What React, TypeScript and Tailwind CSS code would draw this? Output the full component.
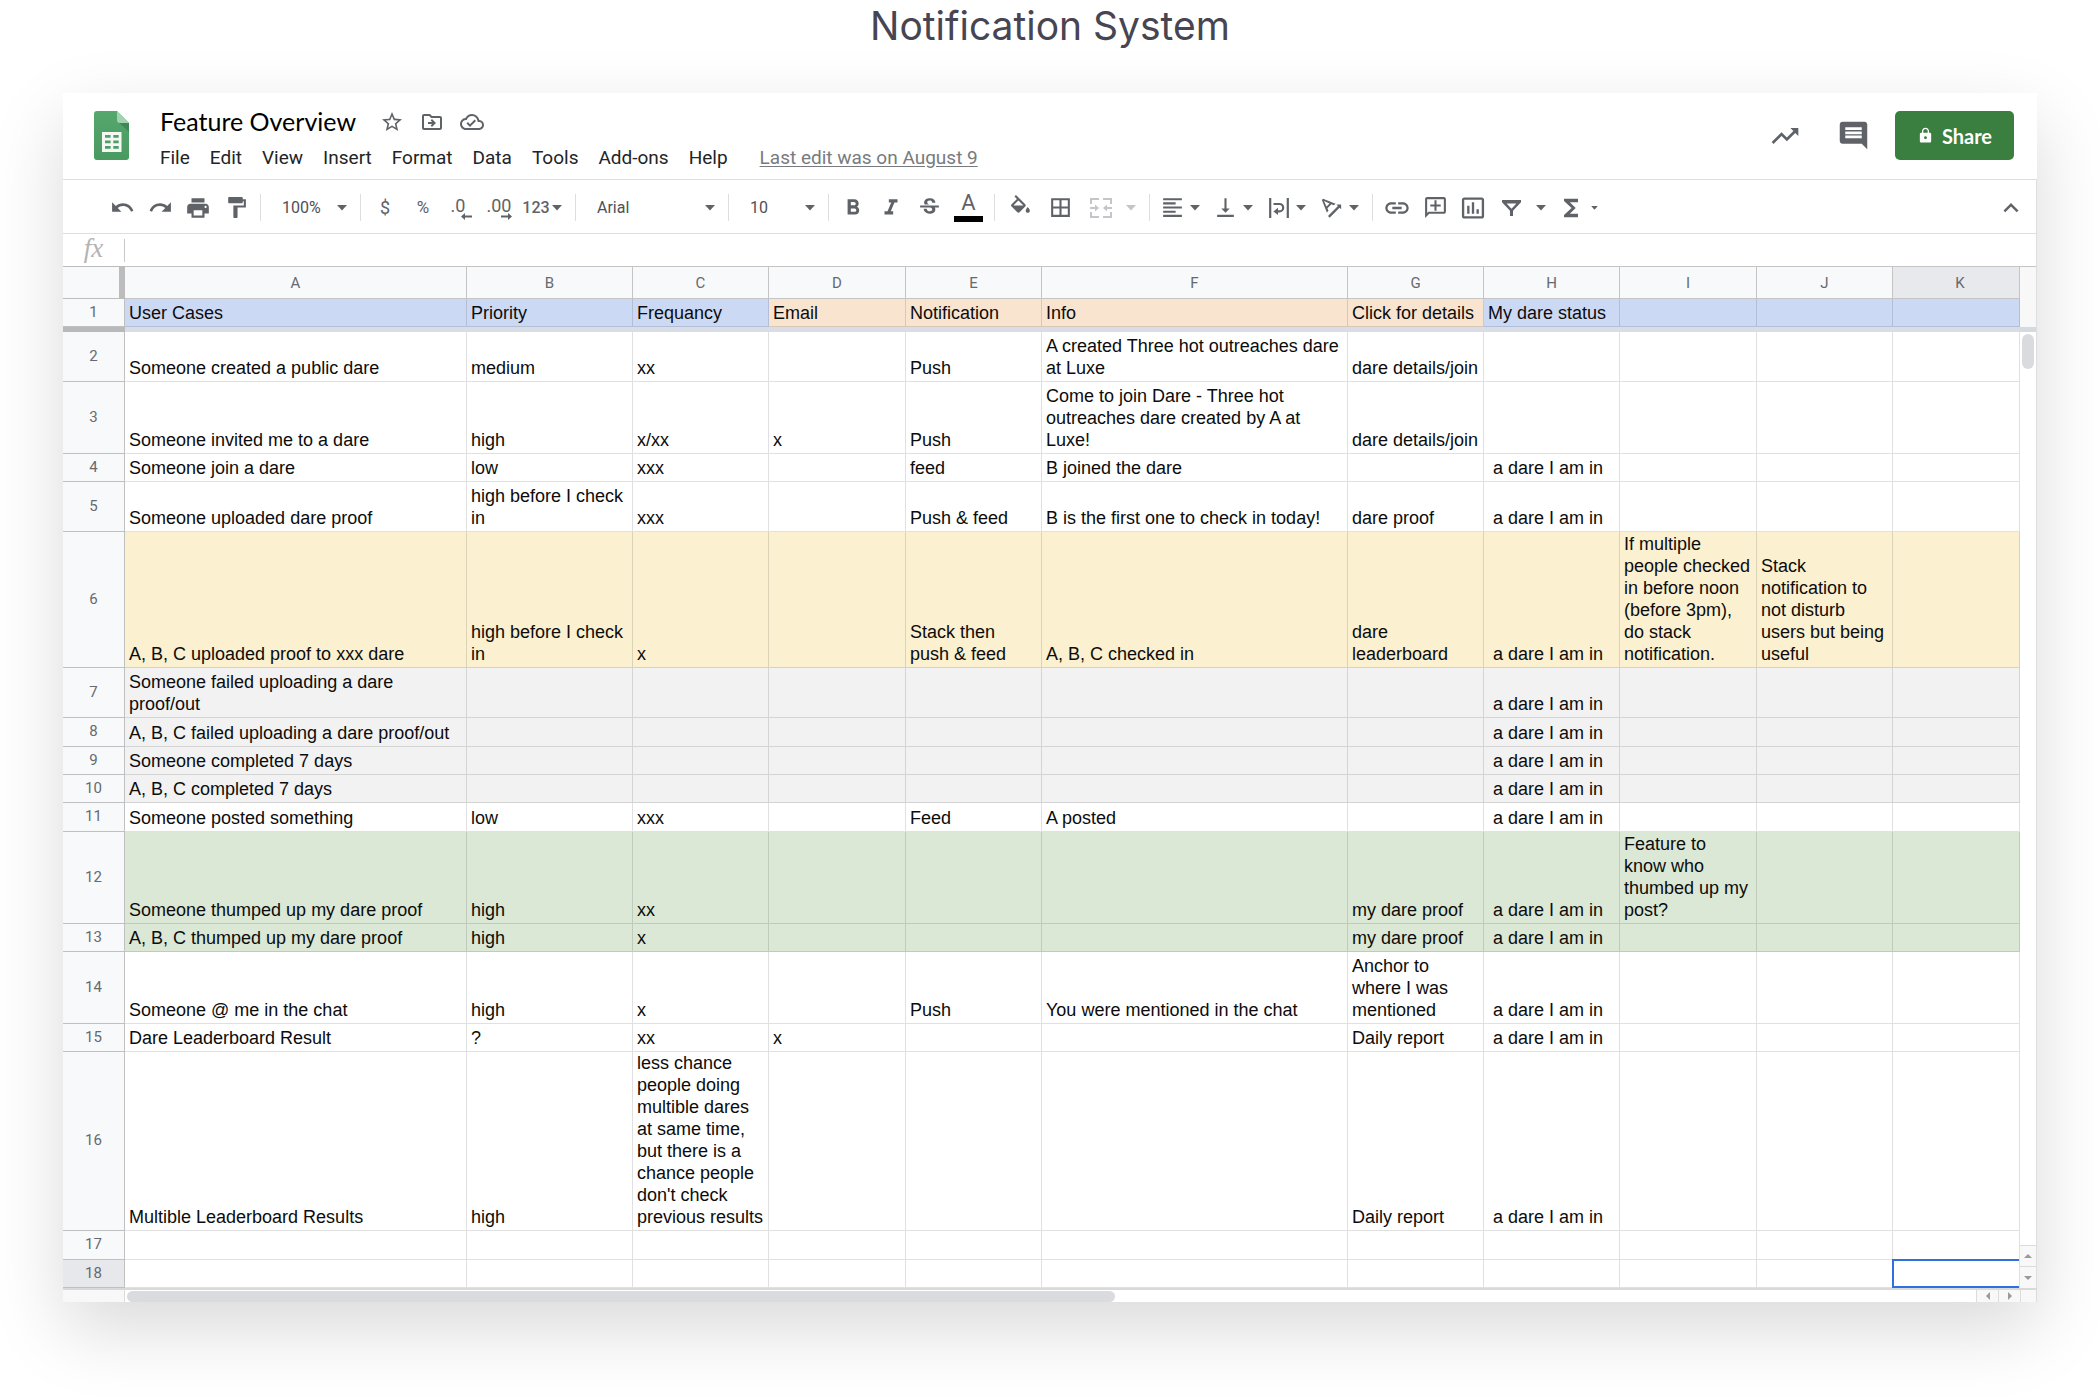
import type { ReactNode } from "react";
import {
  MdBorderAll,
  MdComment,
  MdFormatAlignLeft,
  MdFormatBold,
  MdFormatItalic,
  MdFormatPaint,
  MdFunctions,
  MdInsertChartOutlined,
  MdKeyboardArrowUp,
  MdLink,
  MdLock,
  MdOutlineAddComment,
  MdOutlineCloudDone,
  MdOutlineDriveFileMove,
  MdPrint,
  MdRedo,
  MdStarBorder,
  MdStrikethroughS,
  MdTextRotationAngleup,
  MdTrendingUp,
  MdUndo,
  MdVerticalAlignBottom,
} from "react-icons/md";

type Row = {
  height: string;
  fill?: string;
  cells: Record<string, string>;
};

const COLUMNS = [
  { id: "A", width: "w-[342px]" },
  { id: "B", width: "w-[166px]" },
  { id: "C", width: "w-[136px]" },
  { id: "D", width: "w-[137px]" },
  { id: "E", width: "w-[136px]" },
  { id: "F", width: "w-[306px]" },
  { id: "G", width: "w-[136px]" },
  { id: "H", width: "w-[136px]" },
  { id: "I", width: "w-[137px]" },
  { id: "J", width: "w-[136px]" },
  { id: "K", width: "" },
];

const HEADINGS: Record<string, string> = {
  A: "User Cases",
  B: "Priority",
  C: "Frequancy",
  D: "Email",
  E: "Notification",
  F: "Info",
  G: "Click for details",
  H: "My dare status",
};

const ORANGE_COLUMNS = ["D", "E", "F", "G"];

const YELLOW = "bg-[#fbf0cf]";
const GRAY = "bg-[#f2f2f2]";
const GREEN = "bg-[#dbe8d5]";
const IN_DARE = " a dare I am in";

const ROWS: Row[] = [
  {
    height: "h-[50px]",
    cells: {
      A: "Someone created a public dare",
      B: "medium",
      C: "xx",
      E: "Push",
      F: "A created Three hot outreaches dare\nat Luxe",
      G: "dare details/join",
    },
  },
  {
    height: "h-[72px]",
    cells: {
      A: "Someone invited me to a dare",
      B: "high",
      C: "x/xx",
      D: "x",
      E: "Push",
      F: "Come to join Dare - Three hot\noutreaches dare created by A at\nLuxe!",
      G: "dare details/join",
    },
  },
  {
    height: "h-[28px]",
    cells: { A: "Someone join a dare", B: "low", C: "xxx", E: "feed", F: "B joined the dare", H: IN_DARE },
  },
  {
    height: "h-[50px]",
    cells: {
      A: "Someone uploaded dare proof",
      B: "high before I check\nin",
      C: "xxx",
      E: "Push & feed",
      F: "B is the first one to check in today!",
      G: "dare proof",
      H: IN_DARE,
    },
  },
  {
    height: "h-[136px]",
    fill: YELLOW,
    cells: {
      A: "A, B, C uploaded proof to xxx dare",
      B: "high before I check\nin",
      C: "x",
      E: "Stack then\npush & feed",
      F: "A, B, C checked in",
      G: "dare\nleaderboard",
      H: IN_DARE,
      I: "If multiple\npeople checked\nin before noon\n(before 3pm),\ndo stack\nnotification.",
      J: "Stack\nnotification to\nnot disturb\nusers but being\nuseful",
    },
  },
  { height: "h-[50px]", fill: GRAY, cells: { A: "Someone failed uploading a dare\nproof/out", H: IN_DARE } },
  { height: "h-[29px]", fill: GRAY, cells: { A: "A, B, C failed uploading a dare proof/out", H: IN_DARE } },
  { height: "h-[28px]", fill: GRAY, cells: { A: "Someone completed 7 days", H: IN_DARE } },
  { height: "h-[28px]", fill: GRAY, cells: { A: "A, B, C completed 7 days", H: IN_DARE } },
  {
    height: "h-[29px]",
    cells: { A: "Someone posted something", B: "low", C: "xxx", E: "Feed", F: "A posted", H: IN_DARE },
  },
  {
    height: "h-[92px]",
    fill: GREEN,
    cells: {
      A: "Someone thumped up my dare proof",
      B: "high",
      C: "xx",
      G: "my dare proof",
      H: IN_DARE,
      I: "Feature to\nknow who\nthumbed up my\npost?",
    },
  },
  {
    height: "h-[28px]",
    fill: GREEN,
    cells: { A: "A, B, C thumped up my dare proof", B: "high", C: "x", G: "my dare proof", H: IN_DARE },
  },
  {
    height: "h-[72px]",
    cells: {
      A: "Someone @ me in the chat",
      B: "high",
      C: "x",
      E: "Push",
      F: "You were mentioned in the chat",
      G: "Anchor to\nwhere I was\nmentioned",
      H: IN_DARE,
    },
  },
  {
    height: "h-[28px]",
    cells: { A: "Dare Leaderboard Result", B: "?", C: "xx", D: "x", G: "Daily report", H: IN_DARE },
  },
  {
    height: "h-[179px]",
    cells: {
      A: "Multible Leaderboard Results",
      B: "high",
      C: "less chance\npeople doing\nmultible dares\nat same time,\nbut there is a\nchance people\ndon't check\nprevious results",
      G: "Daily report",
      H: IN_DARE,
    },
  },
  { height: "h-[29px]", cells: {} },
  { height: "h-[28px]", cells: {} },
];

const MENUS = ["File", "Edit", "View", "Insert", "Format", "Data", "Tools", "Add-ons", "Help"];

function SheetsLogo() {
  return (
    <svg viewBox="0 0 35 49" className="h-[49px] w-[35px]" aria-hidden="true">
      <defs>
        <linearGradient id="sheet" x1="0" y1="0" x2="0" y2="1">
          <stop offset="0" stopColor="#55a76d" />
          <stop offset="1" stopColor="#489a60" />
        </linearGradient>
      </defs>
      <path d="M3 0h20l12 12v34a3 3 0 0 1-3 3H3a3 3 0 0 1-3-3V3a3 3 0 0 1 3-3z" fill="url(#sheet)" />
      <path d="M25 11.500l10 9.500v-9z" fill="#3f8757" />
      <path d="M23 0l12 12h-9a3 3 0 0 1-3-3z" fill="#a3d2b1" />
      <path
        fillRule="evenodd"
        fill="#f4f7f4"
        d="M8 21h19.500v20H8zM11 24v2.800h5.600V24zm8.300 0v2.800h5.400V24zM11 29.500v2.800h5.600v-2.800zm8.300 0v2.800h5.400v-2.800zM11 35v2.800h5.600V35zm8.300 0v2.800h5.400V35z"
      />
    </svg>
  );
}

function Caret({ small = false }: { small?: boolean }) {
  return (
    <svg viewBox="0 0 10 6" className={small ? "h-1 w-[7px] shrink-0" : "h-[6px] w-[10px] shrink-0"} aria-hidden="true">
      <path d="M0 0h10L5 5.500z" fill="currentColor" />
    </svg>
  );
}

function Divider() {
  return <div className="mx-[5px] h-[27px] w-px shrink-0 bg-[#dcdee1]" />;
}

function Tool({ label, width = "w-[38px]", children }: { label: string; width?: string; children: ReactNode }) {
  return (
    <button type="button" aria-label={label} className={`flex h-9 shrink-0 items-center justify-center ${width}`}>
      {children}
    </button>
  );
}

function MenuTool({ label, children }: { label: string; children: ReactNode }) {
  return (
    <button type="button" aria-label={label} className="flex h-9 w-[53px] shrink-0 items-center">
      <span className="flex w-[35px] justify-center">{children}</span>
      <Caret />
    </button>
  );
}

function Picker({ label, value, width }: { label: string; value: string; width: string }) {
  return (
    <div className={`relative shrink-0 ${width}`}>
      <select
        aria-label={label}
        defaultValue={value}
        className="h-9 w-full appearance-none bg-transparent pl-4 text-[16px] text-[#4d5156]"
      >
        <option>{value}</option>
      </select>
      <span className="pointer-events-none absolute inset-y-0 right-2 flex items-center">
        <Caret />
      </span>
    </div>
  );
}

function MergeIcon() {
  return (
    <svg viewBox="0 0 22 20" className="h-5 w-[22px]" fill="none" stroke="currentColor" strokeWidth="2" aria-hidden="true">
      <path d="M1 6V1h8M13 1h8v5M1 14v5h8M13 19h8v-5M0 10h6M22 10h-6" />
      <path d="M5 6.500L9 10l-4 3.500zM17 6.500L13 10l4 3.500z" fill="currentColor" stroke="none" />
    </svg>
  );
}

function WrapIcon() {
  return (
    <svg viewBox="0 0 20 20" className="size-5" fill="none" stroke="currentColor" strokeWidth="2.200" aria-hidden="true">
      <path d="M1.200 0v20M18.800 0v20M4.500 6h6a3.600 3.600 0 0 1 0 7.400H8" />
      <path d="M9 9.800v7.200l-4.600-3.600z" fill="currentColor" stroke="none" />
    </svg>
  );
}

function FillIcon() {
  return (
    <svg viewBox="0 0 24 24" className="size-[25px]" fill="currentColor" aria-hidden="true">
      <path d="M16.560 8.940L7.620 0 6.210 1.410l2.380 2.380-5.150 5.150a1.490 1.490 0 0 0 0 2.120l5.500 5.500c.29.29.68.44 1.060.44s.77-.15 1.060-.44l5.500-5.500c.59-.58.59-1.530 0-2.120zM5.210 10L10 5.210 14.790 10H5.210zM19 11.500s-2 2.170-2 3.500c0 1.100.9 2 2 2s2-.9 2-2c0-1.330-2-3.500-2-3.500z" />
    </svg>
  );
}

function FilterIcon() {
  return (
    <svg viewBox="0 0 19 16" className="h-4 w-[19px]" fill="currentColor" aria-hidden="true">
      <path fillRule="evenodd" d="M0 0h19v2.200L11 10.800V16H8v-5.200L0 2.200zM4.600 3.600l4.900 5.200 4.900-5.200z" />
    </svg>
  );
}

function DecimalArrow({ flip = false }: { flip?: boolean }) {
  return (
    <svg
      viewBox="0 0 11 7"
      className={`absolute right-0 bottom-0 h-[7px] w-[11px] ${flip ? "-scale-x-100" : ""}`}
      fill="currentColor"
      aria-hidden="true"
    >
      <path d="M0 3.500L4 0v2.500h7v2H4V7z" />
    </svg>
  );
}

function ScrollArrow({ label, path, box }: { label: string; path: string; box: string }) {
  return (
    <button type="button" aria-label={label} className={`flex items-center justify-center bg-[#f8f8f8] ${box}`}>
      <svg viewBox="0 0 8 8" className="size-2" fill="#9a9a9a" aria-hidden="true">
        <path d={path} />
      </svg>
    </button>
  );
}

function Header() {
  return (
    <header className="flex items-start justify-between border-b border-[#dcdee0] pt-[18px] pr-[23px] pb-[7px] pl-[31px]">
      <div className="flex">
        <SheetsLogo />
        <div className="ml-[31px]">
          <div className="flex h-[22px] items-center">
            <h2 className="pb-[3px] font-[Lato] text-[25px] leading-6 text-black">Feature Overview</h2>
            <div className="ml-6 flex items-center gap-4 text-[#5f6368]">
              <button type="button" aria-label="Star">
                <MdStarBorder className="size-6" />
              </button>
              <button type="button" aria-label="Move">
                <MdOutlineDriveFileMove className="size-6" />
              </button>
              <button type="button" aria-label="See document status">
                <MdOutlineCloudDone className="size-6" />
              </button>
            </div>
          </div>
          <nav className="mt-[11px] flex items-center gap-5 text-[19px] leading-[28px] text-[#222427]">
            {MENUS.map((menu) => (
              <button key={menu} type="button">
                {menu}
              </button>
            ))}
            <a href="#history" className="ml-3 text-[#777b80] underline underline-offset-2">
              Last edit was on August 9
            </a>
          </nav>
        </div>
      </div>
      <div className="flex h-[49px] items-center text-[#5f6368]">
        <button type="button" aria-label="Activity" className="mr-9">
          <MdTrendingUp className="size-8" />
        </button>
        <button type="button" aria-label="Comments" className="mr-[25px]">
          <MdComment className="size-[33px]" />
        </button>
        <button
          type="button"
          className="flex h-[49px] w-[119px] items-center justify-center gap-2 rounded-[5px] bg-[#3a7e40] font-[Lato] text-[20px] font-bold text-white"
        >
          <MdLock className="size-[17px]" />
          Share
        </button>
      </div>
    </header>
  );
}

function Toolbar() {
  return (
    <div className="flex h-[54px] items-center border-r border-b border-[#dcdee0] pt-[2px] pl-10 text-[#5f6368]">
      <Tool label="Undo"><MdUndo className="size-[25px]" /></Tool>
      <Tool label="Redo"><MdRedo className="size-[25px]" /></Tool>
      <Tool label="Print"><MdPrint className="size-[26px]" /></Tool>
      <Tool label="Paint format"><MdFormatPaint className="size-[25px]" /></Tool>
      <Divider />
      <Picker label="Zoom" value="100%" width="w-[89px]" />
      <Divider />
      <Tool label="Currency"><span className="text-[18px]">$</span></Tool>
      <Tool label="Percent"><span className="text-[17px]">%</span></Tool>
      <Tool label="Decrease decimal places">
        <span className="relative h-6 w-[21px] text-left text-[18px] leading-5">
          .0
          <DecimalArrow />
        </span>
      </Tool>
      <Tool label="Increase decimal places">
        <span className="relative h-6 w-[25px] text-left text-[18px] leading-5">
          .00
          <DecimalArrow flip />
        </span>
      </Tool>
      <Tool label="More formats" width="w-[52px] pr-1">
        <span className="mr-[2px] text-[16px] font-medium">123</span>
        <Caret />
      </Tool>
      <Divider />
      <Picker label="Font" value="Arial" width="w-[142px]" />
      <Divider />
      <Picker label="Font size" value="10" width="w-[89px]" />
      <Divider />
      <Tool label="Bold"><MdFormatBold className="size-[26px]" /></Tool>
      <Tool label="Italic"><MdFormatItalic className="size-[26px]" /></Tool>
      <Tool label="Strikethrough"><MdStrikethroughS className="size-[25px]" /></Tool>
      <Tool label="Text color" width="w-[41px]">
        <span className="w-[29px] border-b-[6px] border-black pb-[3px] text-[22px] leading-[20px]">A</span>
      </Tool>
      <Divider />
      <Tool label="Fill color" width="w-10"><FillIcon /></Tool>
      <Tool label="Borders" width="w-[41px]"><MdBorderAll className="size-[25px]" /></Tool>
      <button
        type="button"
        aria-label="Merge cells"
        className="flex h-9 w-[63px] shrink-0 items-center gap-[14px] pl-[9px] text-[#c3c5c8]"
      >
        <MergeIcon />
        <Caret />
      </button>
      <Divider />
      <MenuTool label="Horizontal align"><MdFormatAlignLeft className="size-[25px]" /></MenuTool>
      <MenuTool label="Vertical align"><MdVerticalAlignBottom className="size-[25px]" /></MenuTool>
      <MenuTool label="Text wrapping"><WrapIcon /></MenuTool>
      <MenuTool label="Text rotation"><MdTextRotationAngleup className="size-[27px]" /></MenuTool>
      <Divider />
      <Tool label="Insert link"><MdLink className="size-7" /></Tool>
      <Tool label="Insert comment"><MdOutlineAddComment className="size-[25px] -scale-x-100" /></Tool>
      <Tool label="Insert chart"><MdInsertChartOutlined className="size-7" /></Tool>
      <Tool label="Create a filter"><FilterIcon /></Tool>
      <Tool label="Filter views" width="w-[22px]"><Caret /></Tool>
      <Tool label="Functions"><MdFunctions className="size-7" /></Tool>
      <Tool label="More functions" width="w-2"><Caret small /></Tool>
      <button type="button" aria-label="Hide the menus" className="mr-[10px] ml-auto">
        <MdKeyboardArrowUp className="size-[30px]" />
      </button>
    </div>
  );
}

function FormulaBar() {
  return (
    <label className="flex h-8 items-center border-r border-[#dcdee0]">
      <span className="w-[61px] pb-1 text-center font-['Liberation_Serif'] text-[27px] leading-6 text-[#b4b4b4] italic">fx</span>
      <input
        type="text"
        aria-label="Formula"
        className="h-[23px] min-w-0 flex-1 border-l border-[#c8c8c8] px-2 text-[18px] outline-none"
      />
    </label>
  );
}

function Grid() {
  return (
    <table className="min-w-0 flex-1 table-fixed border-separate border-spacing-0 text-left font-['Liberation_Sans'] text-[18px] leading-[22px] text-[#0c0c0c]">
      <colgroup>
        <col className="w-[62px]" />
        {COLUMNS.map((c) => (
          <col key={c.id} className={c.width} />
        ))}
      </colgroup>
      <thead>
        <tr className="h-[33px] font-[Roboto] text-[15px] text-[#666a6e]">
          <td className="border-y border-r-[6px] border-[#bcbcbc] bg-[#f8f9fa] p-0" />
          {COLUMNS.map((c) => (
            <th
              key={c.id}
              scope="col"
              className={`border-y border-r border-[#c4c4c4] py-0 pr-0 text-center font-normal ${c.id === "K" ? "bg-[#e8e9ec] pl-2" : "bg-[#f8f9fb] pl-0"}`}
            >
              {c.id}
            </th>
          ))}
        </tr>
      </thead>
      <tbody>
        <tr className="h-[28px]">
          <RowNumber n={1} />
          {COLUMNS.map((c) => (
            <td
              key={c.id}
              className={`overflow-hidden border-r border-b border-black/12 pr-[2px] pb-[2px] pl-1 align-bottom whitespace-pre ${ORANGE_COLUMNS.includes(c.id) ? "bg-[#f9e4d0]" : "bg-[#ccd9f5]"}`}
            >
              {HEADINGS[c.id]}
            </td>
          ))}
        </tr>
        <tr className="h-[5px]" aria-hidden="true">
          <td className="bg-[#b9b9b9] p-0" />
          <td colSpan={11} className="bg-[#d9dde6] p-0" />
        </tr>
        {ROWS.map((row, i) => (
          <tr key={i} className={`${row.height} ${row.fill ?? "bg-white"}`}>
            <RowNumber n={i + 2} active={i + 2 === 18} />
            {COLUMNS.map((c) => (
              <td
                key={c.id}
                className="relative border-r border-b border-black/12 pr-[2px] pb-[2px] pl-1 align-bottom whitespace-pre"
              >
                {row.cells[c.id]}
                {c.id === "K" && i + 2 === 18 && (
                  <div className="absolute -top-px right-0 -bottom-px -left-px border-2 border-r-0 border-[#2f6fe0]" />
                )}
              </td>
            ))}
          </tr>
        ))}
      </tbody>
    </table>
  );
}

function RowNumber({ n, active = false }: { n: number; active?: boolean }) {
  return (
    <th
      scope="row"
      className={`border-r border-b border-[#c0c0c0] p-0 pb-[2px] text-center align-middle font-[Roboto] text-[15px] font-normal text-[#666a6e] ${active ? "bg-[#e6e8ec]" : "bg-[#f8f9fb]"}`}
    >
      {n}
    </th>
  );
}

function VerticalScroll() {
  return (
    <div className="flex w-[17px] shrink-0 flex-col border-r border-[#dcdee0] bg-white">
      <div className="h-[61px] border-t border-[#c4c4c4] bg-[#f8f8f8]" />
      <div className="h-[5px] bg-[#d5d9e2]" />
      <div className="flex-1 px-[2px] pt-[2px]">
        <div className="h-[35px] w-3 rounded-full bg-[#dadbdf]" />
      </div>
      <ScrollArrow label="Scroll up" path="M0 6l4-4 4 4z" box="h-[21px] border-t border-[#dcdcdc]" />
      <ScrollArrow label="Scroll down" path="M0 2h8L4 6z" box="h-[22px] border-t border-[#dcdcdc]" />
    </div>
  );
}

function HorizontalScroll() {
  return (
    <div className="flex h-[14px] border-t-2 border-[#d9d9d9]">
      <div className="w-[62px] border-r border-[#dcdcdc] bg-[#f8f8f8]" />
      <div className="flex-1 px-[2px] pt-px">
        <div className="h-[11px] w-[988px] rounded-full bg-[#dadbdf]" />
      </div>
      <ScrollArrow label="Scroll left" path="M6 0v8L2 4z" box="w-[22px] border-l border-[#dcdcdc]" />
      <ScrollArrow label="Scroll right" path="M2 0l4 4-4 4z" box="w-[22px] border-l border-[#dcdcdc]" />
      <div className="w-[17px] border-x border-[#dcdcdc] bg-[#f8f8f8]" />
    </div>
  );
}

export default function App() {
  return (
    <main className="min-h-screen overflow-hidden bg-white font-[Roboto,sans-serif]">
      <h1 className="h-[93px] pt-1 text-center font-[Inter] text-[39px] leading-[44px] text-[#474552]">Notification System</h1>
      <section
        aria-label="Spreadsheet"
        className="mx-[63px] bg-white shadow-[0_27px_68px_rgba(0,0,0,0.15)]"
      >
        <Header />
        <Toolbar />
        <FormulaBar />
        <div className="flex">
          <Grid />
          <VerticalScroll />
        </div>
        <HorizontalScroll />
      </section>
    </main>
  );
}
